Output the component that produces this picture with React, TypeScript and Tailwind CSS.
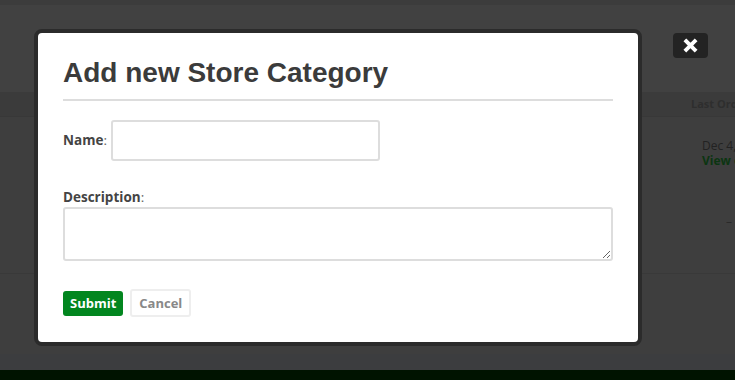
import React from 'react';

const App: React.FC = () => {
  return (
    <div className="relative w-[735px] h-[380px] overflow-hidden bg-[#414141] font-['Open_Sans',sans-serif]">
      {/* Dimmed page behind the dialog */}
      <div className="flex flex-col h-full">
        <div className="h-[5px] bg-[#3c3c3c]" />
        <div className="h-[87px]" />
        <div className="h-[25px] bg-[#3b3b3b] border-b border-[#383838] flex items-center pl-[691px] overflow-hidden">
          <span className="whitespace-nowrap text-[11px] font-bold text-[#2e2e2e]">Last Order</span>
        </div>
        <div className="h-[157px] bg-[#3e3e3e] border-b border-[#393939] flex flex-col pl-[702px] pt-[21px] overflow-hidden">
          <span className="whitespace-nowrap text-[12px] leading-[15px] text-[#222]">Dec 4, 2014</span>
          <span className="whitespace-nowrap text-[12px] leading-[15px] font-bold text-[#0b3511]">View order</span>
          <span className="ml-[24px] mt-[45px] text-[12px] text-[#2a2a2a]">–</span>
        </div>
        <div className="h-[80px] bg-[#3e3e3e]" />
        <div className="h-[16px] bg-[#3c3d3f]" />
        <div className="flex-1 bg-[#001300]" />
      </div>

      {/* Close button */}
      <button className="absolute left-[673px] top-[33px] w-[35px] h-[25px] rounded-[4px] bg-[#232323] flex items-center justify-center">
        <svg width="15" height="15" viewBox="0 0 14 14">
          <path d="M3 3 L11 11 M11 3 L3 11" stroke="#fff" strokeWidth="3.6" strokeLinecap="square" />
        </svg>
      </button>

      {/* Modal */}
      <div className="absolute left-[34px] top-[29px] w-[608px] h-[317px] rounded-[8px] border-4 border-[#2b2b2b] bg-white px-[25px] pt-[26px]">
        <h2 className="font-['Liberation_Sans',Arial,sans-serif] font-bold text-[28px] leading-[28px] text-[#3b3b3b]">
          Add new Store Category
        </h2>
        <div className="mt-[12px] h-[2px] bg-[#dddddd]" />

        <div className="mt-[19px] flex items-center">
          <label className="text-[13.5px] font-bold text-[#444]">
            Name<span className="font-normal text-[#666]">:</span>
          </label>
          <input
            type="text"
            className="ml-[4px] w-[269px] h-[41px] rounded-[3px] border-2 border-[#dddddd] outline-none"
          />
        </div>

        <div className="mt-[27px] text-[13.5px] leading-[18px] font-bold text-[#444]">
          Description<span className="font-normal text-[#666]">:</span>
        </div>
        <textarea className="mt-[1px] block w-[550px] h-[54px] rounded-[3px] border-2 border-[#dddddd] outline-none" />

        <div className="mt-[28px] flex items-center gap-[7px]">
          <button className="h-[25px] px-[7px] rounded-[3px] bg-[#02861f] text-white text-[13px] font-bold leading-none">
            Submit
          </button>
          <button className="h-[28px] px-[7px] rounded-[3px] border-2 border-[#eeeeee] bg-white text-[#888] text-[13px] font-bold leading-none">
            Cancel
          </button>
        </div>
      </div>
    </div>
  );
};

export default App;
